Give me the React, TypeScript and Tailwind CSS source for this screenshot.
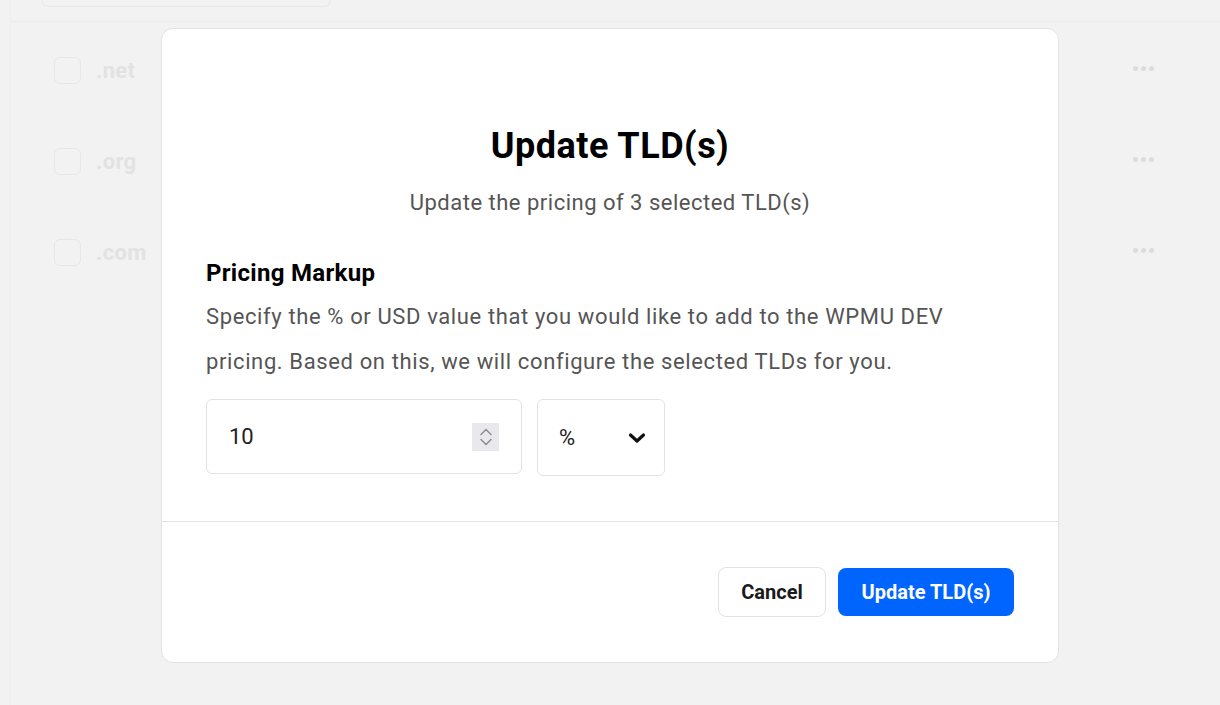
const rows = ['.net', '.org', '.com'];

const App = () => {
  return (
    <div className="relative h-[705px] w-[1220px] overflow-hidden bg-[#f2f2f2] font-['Roboto',sans-serif]">
      {/* page behind the overlay */}
      <div className="ml-[10px] h-full border-l border-[#eeeeee]">
        <div className="h-[22px] border-b border-[#ececec]">
          <div className="ml-[30px] h-[7px] w-[290px] rounded-b-xl border-x border-b border-[#e9e9e9]" />
        </div>
        <div className="flex flex-col pt-[3px]">
          {rows.map((r) => (
            <div key={r} className="flex h-[91px] items-center pl-[43px] pr-[66px]">
              <div className="h-[27px] w-[27px] rounded-md border border-[#e7e7e7]" />
              <span className="ml-[15px] text-[22px] font-bold tracking-[0.3px] text-[#e2e2e2]">{r}</span>
              <div className="mb-[4px] ml-auto flex gap-[3px]">
                <span className="h-[5px] w-[5px] rounded-full bg-[#dcdcdc]" />
                <span className="h-[5px] w-[5px] rounded-full bg-[#dcdcdc]" />
                <span className="h-[5px] w-[5px] rounded-full bg-[#dcdcdc]" />
              </div>
            </div>
          ))}
        </div>
      </div>

      {/* modal */}
      <div className="absolute left-[161px] top-[28px] w-[898px] rounded-xl border border-[#e3e3e3] bg-white">
        <div className="px-[44px] pb-[45px] pt-[97px]">
          <h2 className="text-center text-[36px] font-bold leading-[41px] tracking-[0.5px] text-black">Update TLD(s)</h2>
          <p className="mt-[22px] text-center text-[22px] leading-[28px] tracking-[0.5px] text-[#555]">
            Update the pricing of 3 selected TLD(s)
          </p>

          <h3 className="mt-[41px] text-[24px] font-bold leading-[30px] tracking-[0.3px] text-black">Pricing Markup</h3>
          <p className="mt-[6px] text-[22px] leading-[45px] tracking-[0.62px] text-[#555]">
            Specify the % or USD value that you would like to add to the WPMU DEV pricing. Based on this, we will configure the selected TLDs for you.
          </p>

          <div className="mt-[15px] flex items-start gap-[15px]">
            <div className="flex h-[75px] w-[316px] items-center rounded-md border border-[#e3e3e3] pl-[22px] pr-[22px]">
              <span className="text-[22px] text-[#222]">10</span>
              <div className="ml-auto flex h-[28px] w-[27px] flex-col items-center justify-center gap-[2px] bg-[#e9e9ed]">
                <svg width="14" height="8" viewBox="0 0 14 8" fill="none" stroke="#8d8d95" strokeWidth="1.5" strokeLinecap="round" strokeLinejoin="round">
                  <path d="M2 6.5 7 1.5l5 5" />
                </svg>
                <svg width="14" height="8" viewBox="0 0 14 8" fill="none" stroke="#8d8d95" strokeWidth="1.5" strokeLinecap="round" strokeLinejoin="round">
                  <path d="M2 1.5l5 5 5-5" />
                </svg>
              </div>
            </div>
            <div className="flex h-[77px] w-[128px] items-center rounded-md border border-[#e3e3e3] pl-[21px] pr-[18px]">
              <span className="text-[22px] text-[#222]">%</span>
              <svg className="ml-auto" width="18" height="12" viewBox="0 0 18 12" fill="none" stroke="#111" strokeWidth="3.2" strokeLinecap="round" strokeLinejoin="round">
                <path d="M2.5 3 9 9l6.5-6" />
              </svg>
            </div>
          </div>
        </div>

        <div className="flex justify-end gap-[12px] border-t border-[#e3e3e3] px-[44px] pb-[45px] pt-[45px]">
          <button className="h-[50px] w-[108px] rounded-lg border border-[#e3e3e3] bg-white text-[20px] font-bold text-[#1a1a1a]">
            Cancel
          </button>
          <button className="mt-[1px] h-[48px] w-[176px] rounded-lg bg-[#0064ff] text-[20px] font-bold text-white">
            Update TLD(s)
          </button>
        </div>
      </div>
    </div>
  );
};

export default App;
